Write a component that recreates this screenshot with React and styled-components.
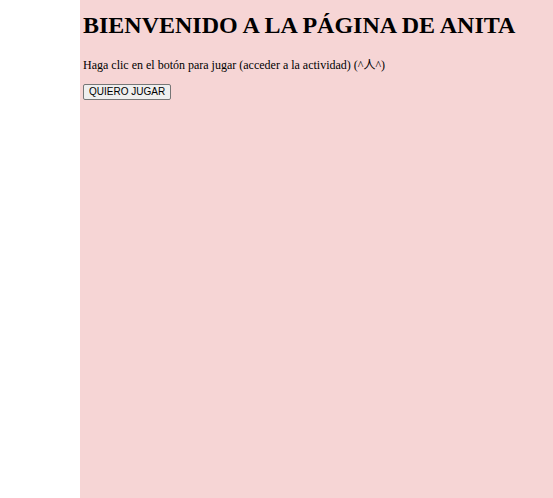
import React from "react";
import styled, { createGlobalStyle } from "styled-components";

const GlobalStyle = createGlobalStyle`
  html, body {
    margin: 0;
    height: 100%;
    background: #ffffff;
  }
  #root {
    height: 100%;
  }
`;

const Page = styled.div`
  display: flex;
  height: 100%;
`;

const Gutter = styled.div`
  width: 80px;
  flex-shrink: 0;
  background: #ffffff;
`;

const Main = styled.main`
  flex: 1;
  display: flex;
  flex-direction: column;
  align-items: flex-start;
  background: #f6d5d5;
  padding: 0 3px;
  font-family: "Liberation Serif", "Noto Sans CJK JP", serif;
  color: #000;
`;

const Title = styled.h1`
  font-size: 24px;
  font-weight: bold;
  margin: 12px 0 0;
`;

const Text = styled.p`
  font-size: 12px;
  margin: 16px 0 0;
`;

const PlayButton = styled.button`
  margin-top: 11px;
  font-family: "Liberation Sans", Arial, sans-serif;
  font-size: 10px;
  line-height: 12px;
  padding: 1px 5px;
  background: #efefef;
  border: 1px solid #767676;
  border-radius: 2px;
  color: #000;
`;

export default function App() {
  return (
    <>
      <GlobalStyle />
      <Page>
        <Gutter />
        <Main>
          <Title>BIENVENIDO A LA PÁGINA DE ANITA</Title>
          <Text>Haga clic en el botón para jugar (acceder a la actividad) (^人^)</Text>
          <PlayButton>QUIERO JUGAR</PlayButton>
        </Main>
      </Page>
    </>
  );
}
